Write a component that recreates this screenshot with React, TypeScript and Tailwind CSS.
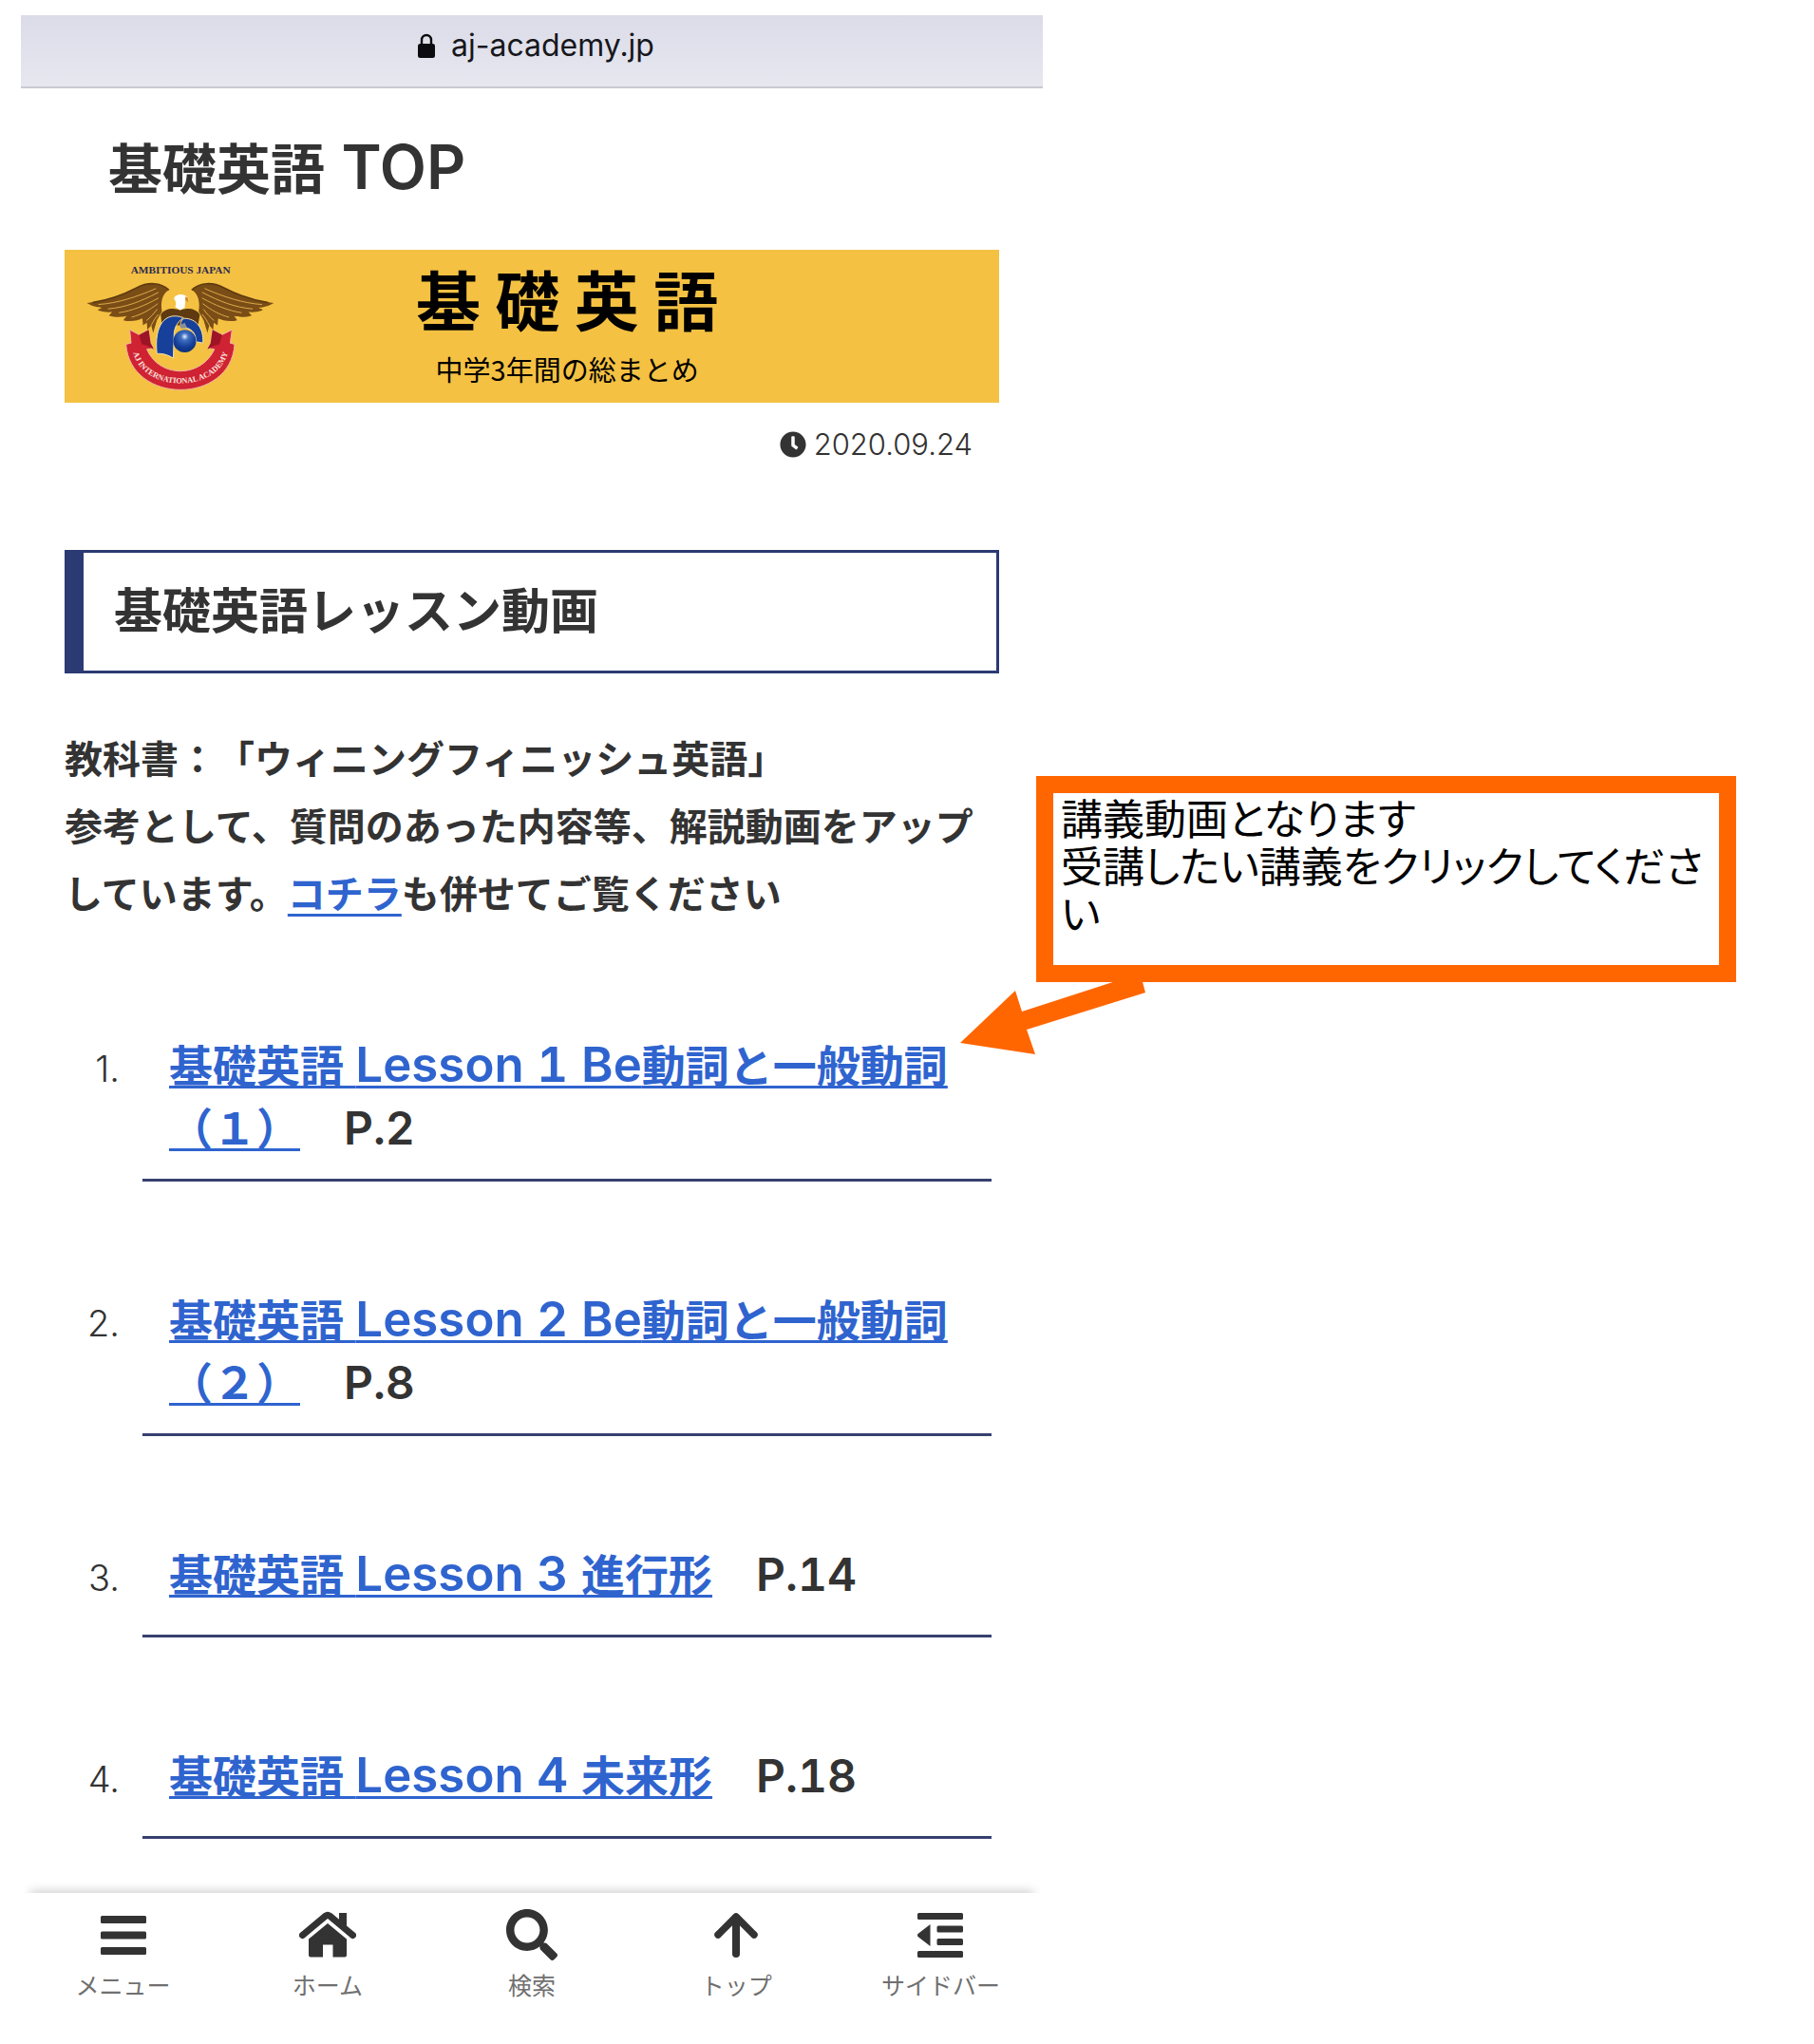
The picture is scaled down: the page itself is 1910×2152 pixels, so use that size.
import React from "react";
import { FaSearch, FaClock } from "react-icons/fa";

const lessons = [
  { label: "Lesson 1 Be", head: "動詞と一般動詞", part: "（１）", page: "P.2" },
  { label: "Lesson 2 Be", head: "動詞と一般動詞", part: "（２）", page: "P.8" },
  { label: "Lesson 3 ", head: "進行形", part: "", page: "P.14" },
  { label: "Lesson 4 ", head: "未来形", part: "", page: "P.18" },
];

function MenuIcon() {
  return (
    <svg viewBox="0 0 56 56" className="size-14" fill="#333" aria-hidden="true">
      <rect x="4" y="8" width="48" height="8" rx="1.5" />
      <rect x="4" y="24.5" width="48" height="8" rx="1.5" />
      <rect x="4" y="41" width="48" height="8" rx="1.5" />
    </svg>
  );
}

function HomeIcon() {
  return (
    <svg viewBox="0 0 60 56" className="h-14 w-[60px]" fill="#333" aria-hidden="true">
      <path d="M42 5 H50 V24 L42 18 Z" />
      <path d="M3.5 28.5 L28 8 Q30 6.5 32 8 L56.5 28.5" fill="none" stroke="#333" strokeWidth="7" strokeLinecap="round" strokeLinejoin="round" />
      <path d="M30 16 L50 32.5 V49.5 Q50 51.5 48 51.5 H35.5 V38.5 H25 V51.5 H12 Q10 51.5 10 49.5 V32.5 Z" />
    </svg>
  );
}

function SearchIcon() {
  return <FaSearch className="size-14 p-px" aria-hidden="true" />;
}

function ArrowUpIcon() {
  return (
    <svg viewBox="0 0 56 56" className="size-14" fill="none" stroke="#333" strokeLinecap="round" strokeLinejoin="round" aria-hidden="true">
      <path d="M28 10 V48" strokeWidth="8" />
      <path d="M9 28 L28 9 L47 28" strokeWidth="7.5" />
    </svg>
  );
}

function SidebarIcon() {
  return (
    <svg viewBox="0 0 56 56" className="size-14" fill="#333" aria-hidden="true">
      <rect x="4" y="5" width="48" height="7" rx="1.5" />
      <rect x="24.5" y="18.5" width="27.5" height="7" rx="1.5" />
      <rect x="24.5" y="32" width="27.5" height="7" rx="1.5" />
      <rect x="4" y="45" width="48" height="7" rx="1.5" />
      <path d="M17.5 17 V40 L4.5 30 Q3.5 28.5 4.5 27 Z" />
    </svg>
  );
}

const navItems = [
  { label: "メニュー", Icon: MenuIcon },
  { label: "ホーム", Icon: HomeIcon },
  { label: "検索", Icon: SearchIcon },
  { label: "トップ", Icon: ArrowUpIcon },
  { label: "サイドバー", Icon: SidebarIcon },
];

function Wing() {
  return (
    <g>
      <path
        d="M352 150 C325 125 285 125 250 143 C205 166 150 186 92 191 C112 203 128 205 140 206 C130 210 128 212 126 214 C145 221 160 221 172 220 C168 224 165 228 162 231 C182 238 205 236 218 233 C212 239 210 243 208 246 C232 252 255 246 268 240 L270 262 L282 254 L284 276 L296 262 L302 286 L314 246 L330 218 C325 190 330 162 352 150 Z"
        fill="#7a4d16"
      />
      <g fill="none" stroke="#dca94a" strokeWidth="3" strokeLinecap="round">
        <path d="M130 196 C190 192 250 172 310 146" />
        <path d="M160 210 C215 205 260 188 318 158" />
        <path d="M195 222 C235 216 275 200 318 176" />
        <path d="M235 236 C265 228 290 214 316 194" />
        <path d="M282 246 C292 238 304 226 314 212" />
        <path d="M296 262 C302 250 308 240 318 228" />
      </g>
      <path
        d="M352 150 C325 125 285 125 250 143 C210 164 160 182 110 190"
        fill="none"
        stroke="#5f3a10"
        strokeWidth="5"
      />
    </g>
  );
}

function EagleLogo() {
  return (
    <svg viewBox="80 50 620 430" className="h-[143px] w-[207px] shrink-0" role="img" aria-label="AJ International Academy">
      <defs>
        <path id="ribbon-arc" d="M236 330 C250 484 526 484 542 330" />
        <radialGradient id="globe" cx="0.5" cy="0.3" r="0.75">
          <stop offset="0" stopColor="#e8f0ff" />
          <stop offset="0.22" stopColor="#3f6fc0" />
          <stop offset="0.6" stopColor="#16409a" />
          <stop offset="1" stopColor="#0b2a70" />
        </radialGradient>
      </defs>
      <text
        x="389"
        y="97"
        textAnchor="middle"
        fontSize="34"
        fontWeight="700"
        fontFamily="Liberation Serif, serif"
        fill="#2c2b50"
      >
        AMBITIOUS JAPAN
      </text>
      <Wing />
      <g transform="translate(776 0) scale(-1 1)">
        <Wing />
      </g>
      <path d="M326 228 C340 208 365 206 388 214 C412 206 436 208 450 228 L444 262 L330 262 Z" fill="#5f3a10" />
      <path d="M368 178 C370 162 400 160 410 172 C415 176 416 182 412 188 L404 184 L402 206 L388 214 L372 204 C376 194 374 186 368 178 Z" fill="#fff" />
      <path d="M404 172 C413 172 416 180 412 189 L404 183 Z" fill="#d88a1a" />
      <path
        d="M228 276 L258 292 L288 276 L294 318 L304 334 L282 338 C322 430 454 430 496 338 L474 334 L484 318 L490 276 L520 292 L552 276 L546 318 L560 322 C548 514 230 514 216 322 L232 318 Z"
        fill="#cf2233"
        stroke="#f0b8a0"
        strokeWidth="3"
      />
      <path d="M258 292 L288 276 L294 318 L304 338 L282 326 L266 322 Z M520 292 L490 276 L484 318 L474 338 L496 326 L512 322 Z" fill="#9c1426" />
      <text fontSize="25" fontWeight="700" fontFamily="Liberation Serif, serif" fill="#fbe6df">
        <textPath href="#ribbon-arc" startOffset="50%" textAnchor="middle">
          AJ INTERNATIONAL ACADEMY
        </textPath>
      </text>
      <path
        d="M398 238 C340 216 304 262 314 352 C332 350 350 356 366 366 L368 296 C368 270 378 252 398 238 Z"
        fill="#16409a"
        stroke="#f6e3b0"
        strokeWidth="3"
      />
      <path d="M400 240 C440 240 462 272 460 318 L438 314 C438 284 420 268 392 268 C386 258 390 246 400 240 Z" fill="#16409a" stroke="#f6e3b0" strokeWidth="3" />
      <circle cx="402" cy="312" r="36" fill="url(#globe)" />
      <path d="M386 262 L402 254 L410 270 L390 272 Z" fill="#8a8f9c" />
    </svg>
  );
}

function LockIcon() {
  return (
    <svg viewBox="0 0 20 28" className="h-7 w-5" aria-hidden="true">
      <path d="M5 13 V8 a5 5 0 0 1 10 0 V13" fill="none" stroke="#0c0c10" strokeWidth="2.4" />
      <rect x="1" y="12" width="18" height="15" rx="2.5" fill="#0c0c10" />
    </svg>
  );
}

export default function App() {
  return (
    <div lang="ja" className="flex min-h-screen items-start bg-white pt-4 pl-[22px] font-['Inter','Noto_Sans_CJK_JP',sans-serif] text-[#333] [text-spacing-trim:space-all]">
      <div className="flex max-w-[1076px] flex-1 flex-col">
        <header className="flex h-[77px] items-start justify-center border-b-2 border-[#c9cad1] bg-linear-to-b from-[#dbdce8] to-[#e7e7f0] pt-3">
          <p className="flex items-center gap-4 pl-2 text-[32px] leading-10 text-[#17171c]">
            <LockIcon />
            aj-academy.jp
          </p>
        </header>

        <main className="px-[46px]">
          <h1 className="mt-[50px] pl-[46px] text-[57px] leading-[72px] font-bold">
            基礎英語 <span className="ml-1 text-[64px] leading-none font-semibold">TOP</span>
          </h1>

          <div className="mt-12 flex h-[161px] items-start bg-[#f4c142] pt-[9px] pl-[19px]">
            <EagleLogo />
            <div className="ml-36 flex flex-col items-center gap-3 text-black">
              <p className="font-['Noto_Sans_CJK_JP',sans-serif] text-[68px] leading-[84px] font-bold whitespace-nowrap">基 礎 英 語</p>
              <p className="font-['Noto_Sans_CJK_JP',sans-serif] text-[29px] leading-10 whitespace-nowrap">中学3年間の総まとめ</p>
            </div>
          </div>

          <p className="mt-[26px] flex items-center justify-end gap-2 pr-7 text-[31px] leading-9 font-light">
            <FaClock className="size-7" aria-hidden="true" />
            <time dateTime="2020-09-24">2020.09.24</time>
          </p>

          <h2 className="mt-[93px] border-[3px] border-l-[20px] border-[#2b3a72] py-[26px] pl-8 text-[51px] leading-[72px] font-bold">
            基礎英語レッスン動画
          </h2>

          <p className="mt-[55px] text-[40px] leading-[71px] font-bold">
            教科書：「ウィニングフィニッシュ英語」
            <br />
            参考として、質問のあった内容等、解説動画をアップしています。
            <a href="#reference" className="text-[#2f64cf] underline decoration-[3px] underline-offset-[6px]">コチラ</a>
            も併せてご覧ください
          </p>

          <ol className="mt-28 flex flex-col gap-[113px] pr-2">
            {lessons.map((lesson, i) => (
              <li key={lesson.page} className="flex">
                <span className="w-[82px] shrink-0 pr-6 text-right text-[38px] leading-[72px] font-light">{i + 1}.</span>
                <div className="flex-1 border-b-[3px] border-[#36416f] pb-5 pl-7">
                  <p className="min-h-[76px] text-[46px] leading-[66px] font-bold tabular-nums">
                    <a href={`#lesson-${i + 1}`} className="text-[#2f64cf] underline decoration-[3px] underline-offset-[4px]">
                      基礎英語 <span className="text-[51px] leading-none font-semibold">{lesson.label}</span>
                      {lesson.head}
                      {lesson.part}
                    </a>
                    {"　"}
                    <span className="text-[48px] leading-none font-semibold">{lesson.page}</span>
                  </p>
                </div>
              </li>
            ))}
          </ol>
        </main>

        <nav className="mt-[57px] grid grid-cols-5 bg-white pt-4 pb-10 shadow-[0_-12px_10px_-10px_rgba(0,0,0,0.2)]">
          {navItems.map(({ label, Icon }) => (
            <button key={label} type="button" className="flex flex-col items-center gap-2 whitespace-nowrap">
              <Icon />
              <span className="text-[25px] leading-9 text-[#707070]">{label}</span>
            </button>
          ))}
        </nav>
      </div>

      <aside className="relative z-10 mt-[801px] -ml-[7px] h-[217px] w-[737px] border-[18px] border-[#ff6600] bg-white pl-2 text-black">
        <p className="font-['Noto_Sans_CJK_JP',sans-serif] text-[44px] leading-[50px] [font-feature-settings:'palt']">
          講義動画となります
          <br />
          受講したい講義をクリックしてください
        </p>
        <svg viewBox="0 0 200 80" className="absolute top-[195px] -left-[98px] h-20 w-[200px]" aria-hidden="true">
          <path d="M0 68 L58 13 L65 35 L173 0 H191 L195 15 L70 54 L79 80 Z" fill="#ff6600" />
        </svg>
      </aside>
    </div>
  );
}
